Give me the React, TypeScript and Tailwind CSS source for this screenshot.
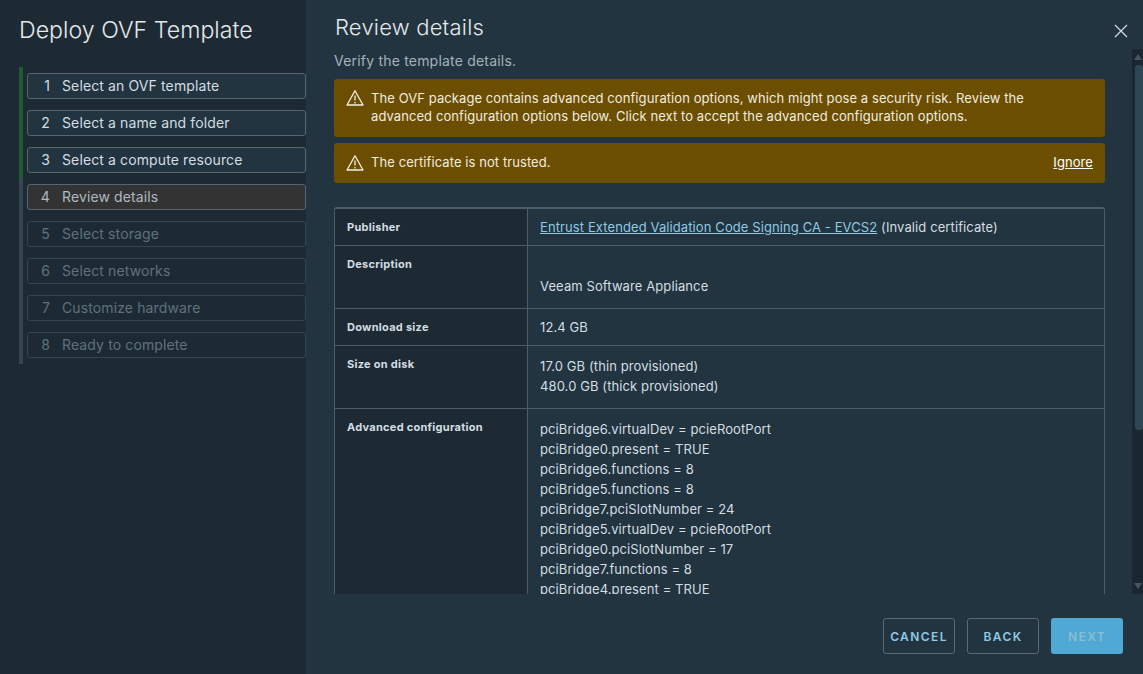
import React from "react";

const steps = [
  { n: 1, t: "Select an OVF template", s: "done" },
  { n: 2, t: "Select a name and folder", s: "done" },
  { n: 3, t: "Select a compute resource", s: "done" },
  { n: 4, t: "Review details", s: "active" },
  { n: 5, t: "Select storage", s: "off" },
  { n: 6, t: "Select networks", s: "off" },
  { n: 7, t: "Customize hardware", s: "off" },
  { n: 8, t: "Ready to complete", s: "off" },
];

const config = [
  "pciBridge6.virtualDev = pcieRootPort",
  "pciBridge0.present = TRUE",
  "pciBridge6.functions = 8",
  "pciBridge5.functions = 8",
  "pciBridge7.pciSlotNumber = 24",
  "pciBridge5.virtualDev = pcieRootPort",
  "pciBridge0.pciSlotNumber = 17",
  "pciBridge7.functions = 8",
  "pciBridge4.present = TRUE",
];

function Warn() {
  return (
    <svg width="18" height="18" viewBox="0 0 18 18" fill="none" stroke="#f3efe3" strokeWidth="1.3" className="shrink-0">
      <path d="M9 1.8 L17 16 H1 Z" strokeLinejoin="round" />
      <path d="M9 6.5 V11.5" />
      <path d="M9 13 V14.4" />
    </svg>
  );
}

function Row({
  label,
  h,
  lp,
  vp,
  children,
}: {
  label: string;
  h: string;
  lp: string;
  vp: string;
  children: React.ReactNode;
}) {
  return (
    <div className={`flex border-b border-[#4a5d69] ${h}`}>
      <div className={`w-[193px] shrink-0 bg-[#1d2a34] border-r border-[#4a5d69] pl-3 text-[11px] font-bold leading-[16px] tracking-[0.27px] text-[#d3dde2] ${lp}`}>
        {label}
      </div>
      <div className={`flex-1 pl-3 text-[13px] leading-[20px] tracking-[0.1px] text-[#d3dde2] ${vp}`}>{children}</div>
    </div>
  );
}

export default function App() {
  return (
    <div className="flex h-[674px] w-[1143px] overflow-hidden bg-[#22343f] font-['Inter','Liberation_Sans',sans-serif]">
      <aside className="w-[307px] shrink-0 border-r border-[#253742] bg-[#1d2a34] pl-[19px]">
        <h1 className="mt-[15px] text-[23.2px] font-light leading-[30px] text-[#e3e8ea]">Deploy OVF Template</h1>
        <div className="relative mt-[22px] h-[297px] pl-2 pt-[6px]">
          <div className="absolute left-0 top-0 h-full w-1 bg-[#35474f]" />
          <div className="absolute left-0 top-0 h-[111px] w-1 bg-[#1f5a34]" />
          <div className="flex flex-col gap-[11px]">
            {steps.map((s) => (
              <div
                key={s.n}
                className={`flex h-[26px] items-center rounded-[3px] border pb-[1px] text-[14px] tracking-[0.12px] ${
                  s.s === "done"
                    ? "border-[#56656f] bg-[#22343f] text-[#d3dde2]"
                    : s.s === "active"
                    ? "border-[#56656f] bg-[#333333] text-[#adbac1]"
                    : "border-[#34454f] bg-transparent text-[#5f727c]"
                }`}
              >
                <span className="w-[34px] pr-[12px] text-right">{s.n}</span>
                <span>{s.t}</span>
              </div>
            ))}
          </div>
        </div>
      </aside>
      <main className="relative flex min-w-0 flex-1 flex-col">
        <button className="absolute right-[15px] top-[24px] z-10">
          <svg width="14" height="14" viewBox="0 0 14 14" stroke="#d3dde2" strokeWidth="1.2">
            <path d="M1 1 L13 13 M13 1 L1 13" />
          </svg>
        </button>
        <h2 className="ml-[28px] mt-[13px] h-[36px] text-[22px] font-light leading-[28px] tracking-[0.2px] text-[#e3e8ea]">Review details</h2>
        <div className="relative h-[545px] overflow-hidden pl-[27px]">
          <div className="absolute right-0 top-0 flex h-full w-[11px] flex-col bg-[#1a2630]">
            <div className="flex h-[16px] items-center justify-center">
              <div className="h-0 w-0 border-x-[4px] border-b-[6px] border-x-transparent border-b-[#44565f]" />
            </div>
            <div className="ml-[3px] h-[365px] w-[8px] rounded-[3px] bg-[#2f4754]" />
            <div className="mt-auto flex h-[16px] items-center justify-center">
              <div className="h-0 w-0 border-x-[4px] border-t-[6px] border-x-transparent border-t-[#44565f]" />
            </div>
          </div>
          <div className="w-[771px]">
            <p className="mt-[3px] text-[14px] leading-[18px] tracking-[0.2px] text-[#a3b2ba]">Verify the template details.</p>
            <div className="mt-[9px] flex h-[58px] items-start gap-[7px] rounded-[3px] bg-[#6b4e00] pl-3 pr-3 pt-[10px] text-[13px] leading-[18px] tracking-[0.08px] text-[#f0ece0]">
              <Warn />
              <p className="w-[690px]">
                The OVF package contains advanced configuration options, which might pose a security risk. Review the advanced configuration options below. Click next to accept the advanced configuration options.
              </p>
            </div>
            <div className="mt-[6px] flex h-[40px] items-center gap-[7px] rounded-[3px] bg-[#6b4e00] px-3 text-[13px] tracking-[0.08px] text-[#f0ece0]">
              <Warn />
              <p className="flex-1">The certificate is not trusted.</p>
              <a className="text-white underline">Ignore</a>
            </div>
            <div className="mt-[24px] rounded-t-[3px] border-x border-t-2 border-[#4a5d69]">
              <Row label="Publisher" h="h-[37px]" lp="pt-[10px]" vp="pt-[8px]">
                <span className="text-[#8fc9e4] underline">Entrust Extended Validation Code Signing CA - EVCS2</span> (Invalid certificate)
              </Row>
              <Row label="Description" h="h-[63px]" lp="pt-[10px]" vp="pt-[30px]">
                <div>Veeam Software Appliance</div>
              </Row>
              <Row label="Download size" h="h-[37px]" lp="pt-[10px]" vp="pt-[8px]">12.4 GB</Row>
              <Row label="Size on disk" h="h-[63px]" lp="pt-[10px]" vp="pt-[10px]">
                <div>17.0 GB (thin provisioned)</div>
                <div>480.0 GB (thick provisioned)</div>
              </Row>
              <Row label="Advanced configuration" h="h-[300px]" lp="pt-[10px]" vp="pt-[10px]">
                {config.map((c) => (
                  <div key={c}>{c}</div>
                ))}
              </Row>
            </div>
          </div>
        </div>
        <footer className="mt-[24px] flex justify-end gap-3 pr-5">
          <button className="h-[36px] w-[72px] rounded-[3px] border border-[#5c6b73] pt-[1px] text-[12px] font-semibold tracking-[1.4px] text-[#8fc9e4]">CANCEL</button>
          <button className="h-[36px] w-[72px] rounded-[3px] border border-[#5c6b73] pt-[1px] text-[12px] font-semibold tracking-[1.4px] text-[#8fc9e4]">BACK</button>
          <button className="h-[36px] w-[72px] rounded-[3px] bg-[#4fa9d4] pt-[1px] text-[12px] font-semibold tracking-[1.4px] text-[#8cbdd0]">NEXT</button>
        </footer>
      </main>
    </div>
  );
}
